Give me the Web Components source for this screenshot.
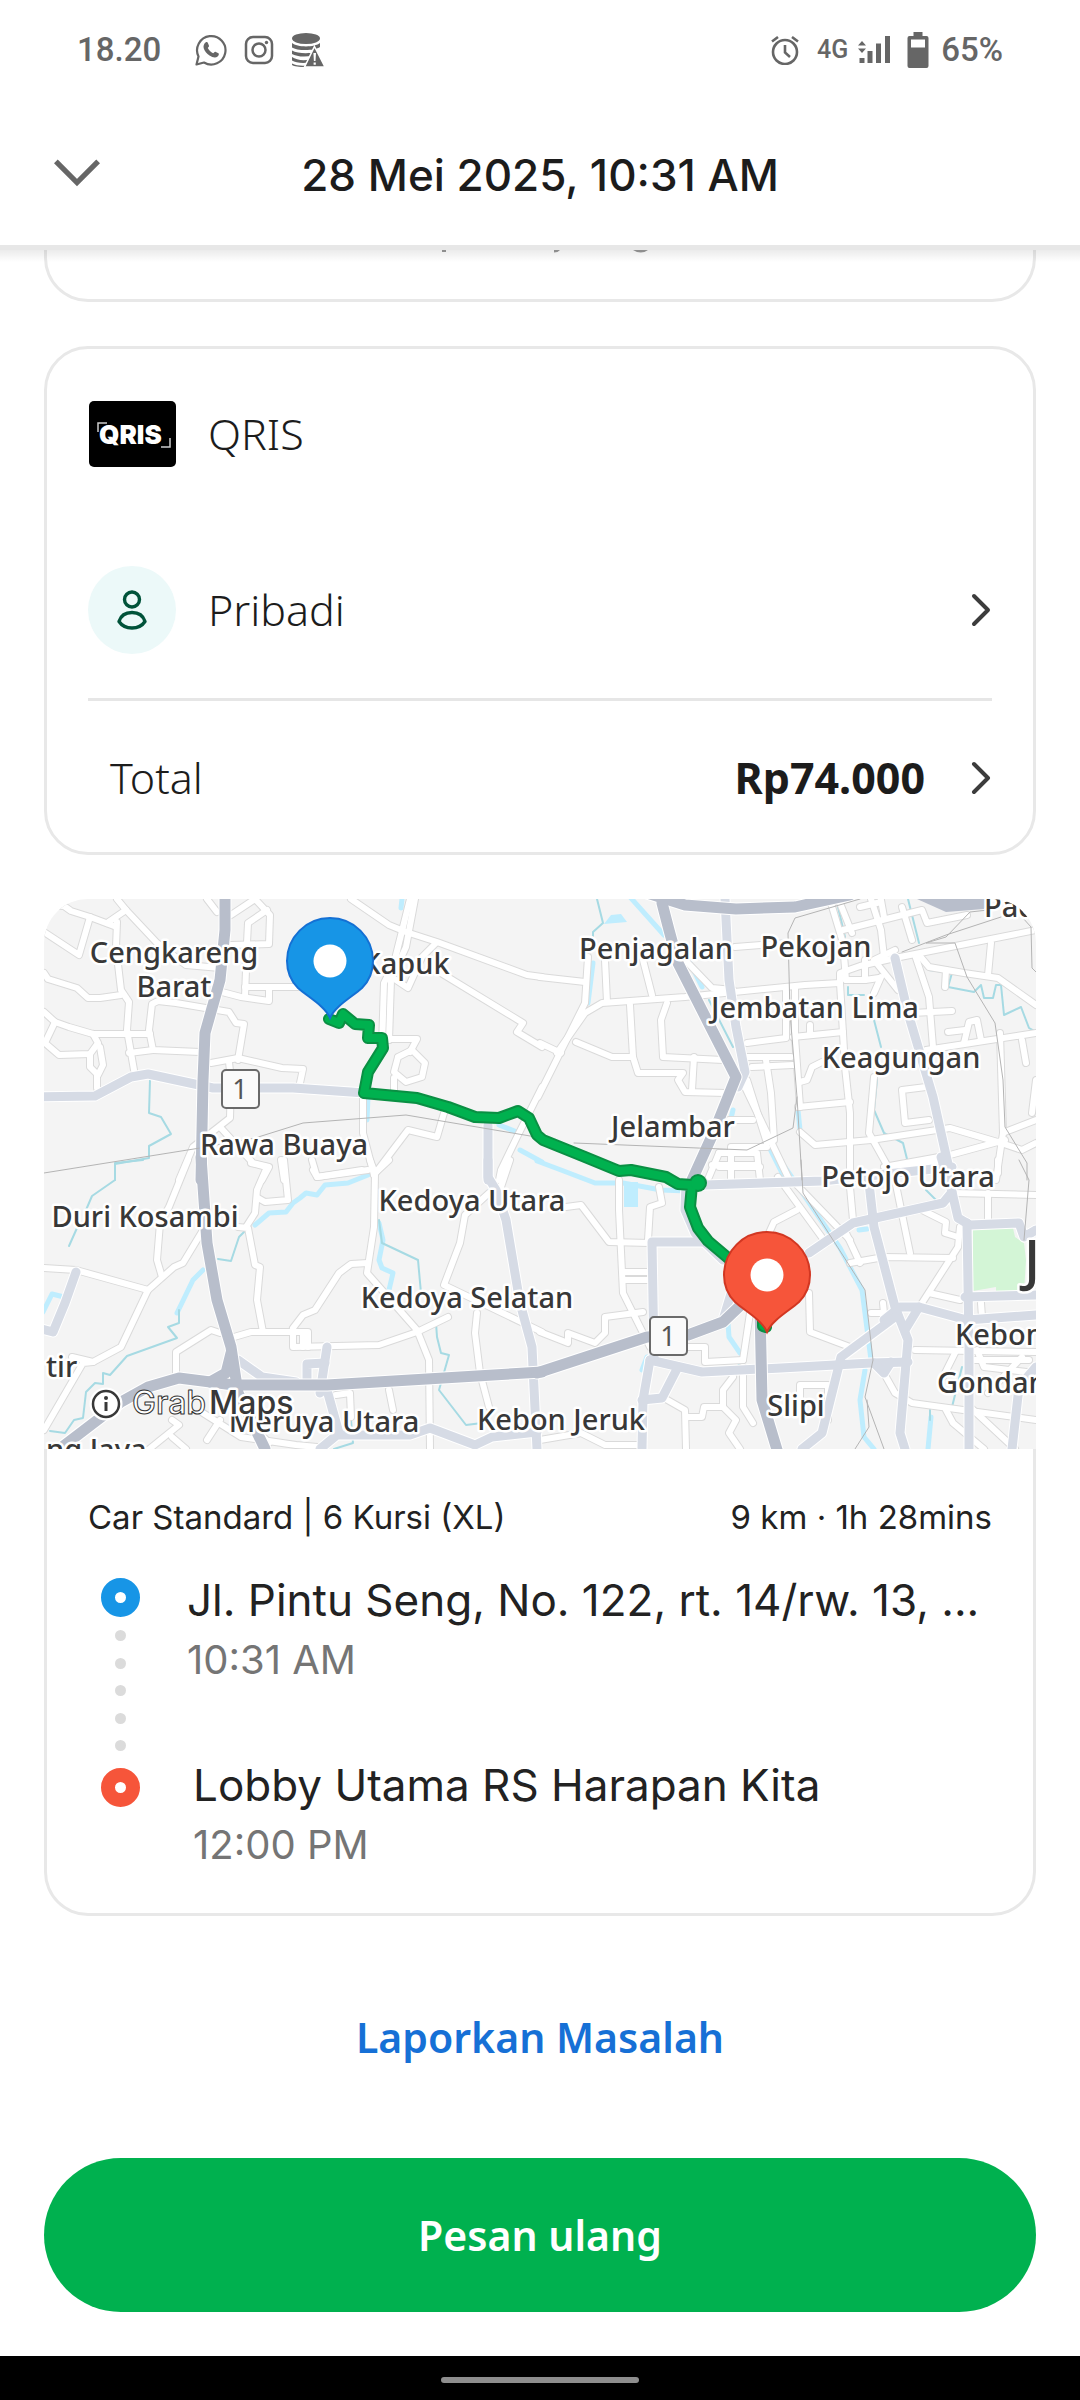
<!DOCTYPE html>
<html lang="id">
<head>
<meta charset="utf-8">
<meta name="viewport" content="width=device-width, initial-scale=1">
<title>28 Mei 2025, 10:31 AM</title>
<style>
    body {
        margin: 0;
        background: #fff;
        color: #1c1c1c;
        font-family: Inter, sans-serif;
    }
</style>
</head>
<body>
<receipt-page>
    <status-bar slot="top" time="18.20" network="4G" battery="65%"></status-bar>
    <page-header slot="top">28 Mei 2025, 10:31 AM</page-header>

    <cut-card></cut-card>

    <info-card>
        <info-row>
            <qris-logo slot="icon"></qris-logo>
            QRIS
        </info-row>
        <info-row link>
            <profile-avatar slot="icon"></profile-avatar>
            Pribadi
        </info-row>
        <total-row slot="footer" amount="Rp74.000">Total</total-row>
    </info-card>

    <trip-card service="Car Standard | 6 Kursi (XL)" summary="9 km · 1h 28mins">
        <route-map slot="map"></route-map>
        <trip-stop time="10:31 AM">Jl. Pintu Seng, No. 122, rt. 14/rw. 13, ...</trip-stop>
        <trip-stop time="12:00 PM" indent>Lobby Utama RS Harapan Kita</trip-stop>
    </trip-card>

    <report-link href="#laporkan">Laporkan Masalah</report-link>
    <primary-button>Pesan ulang</primary-button>
    <gesture-bar slot="bottom"></gesture-bar>
</receipt-page>

<script>
const BRAND_FONT = '"Noto Sans", "Open Sans", sans-serif';

const CHEVRON = `
    <svg class="chevron" width="22" height="34" viewBox="0 0 22 34" fill="none" stroke="#3c3c3c" stroke-width="4" stroke-linecap="round" stroke-linejoin="round" aria-hidden="true">
        <path d="M4 3 L18 17 L4 31"/>
    </svg>`;

class ReceiptPage extends HTMLElement {
    constructor() {
        super();
        this.attachShadow({ mode: 'open' });
        this.shadowRoot.innerHTML = `
            <style>
                :host {
                    display: flex;
                    flex-direction: column;
                    min-height: 100vh;
                }
                main {
                    flex: 1;
                    display: flex;
                    flex-direction: column;
                    padding: 0 44px 44px;
                }
            </style>
            <slot name="top"></slot>
            <main><slot></slot></main>
            <slot name="bottom"></slot>
        `;
    }
}

class StatusBar extends HTMLElement {
    constructor() {
        super();
        this.attachShadow({ mode: 'open' });
    }

    connectedCallback() {
        this.shadowRoot.innerHTML = `
            <style>
                :host {
                    display: flex;
                    justify-content: space-between;
                    align-items: center;
                    height: 100px;
                    padding: 0 77px;
                    font: 500 33px/40px Roboto, sans-serif;
                    color: #666;
                }
                div {
                    display: flex;
                    align-items: center;
                }
                .apps { gap: 17px; }
                .apps span { margin-right: 17px; }
                .network { font-size: 25px; margin: 0 10px 0 17px; }
                .battery { margin: 0 12px 0 17px; }
                svg { display: block; }
            </style>
            <div class="apps">
                <span>${this.getAttribute('time')}</span>
                <svg width="32" height="32" viewBox="0 0 32 32" aria-hidden="true">
                    <path d="M1.5 30.5 L3.5 22.5 A14.2 14.2 0 1 1 9 28.5 Z" fill="none" stroke="#666" stroke-width="2.2" stroke-linejoin="round"/>
                    <path d="M10.5 8.5 c1-.8 2-.5 2.300 .3 l1.2 3 c.3 .8-1 1.8-1.2 2.3 c1 2.2 3 4.2 5.3 5.1 c.7-.2 1.5-1.9 2.3-1.5 l3 1.5 c1 .5 .3 2.5-.8 3.4 c-2 1.6-5 1-8.1-1 c-2.8-1.9-5-4.6-5.8-7.4 c-.6-2.2 .3-4.5 1.8-5.7 Z" fill="#666"/>
                </svg>
                <svg width="30" height="30" viewBox="0 0 30 30" fill="none" stroke="#666" stroke-width="2.5" aria-hidden="true">
                    <rect x="2" y="2" width="26" height="26" rx="7"/>
                    <circle cx="15" cy="15" r="6.5"/>
                    <circle cx="22.5" cy="7.5" r="1.7" fill="#666" stroke="none"/>
                </svg>
                <svg width="34" height="34" viewBox="0 0 34 34" aria-hidden="true">
                    <ellipse cx="15" cy="5.5" rx="14" ry="5.5" fill="#666"/>
                    <path d="M1 10 C6 14.5 24 14.5 29 10 V14 C24 18 6 18 1 14.5 Z M1 17.5 C6 20.5 18 21 24 19 L22 22.500 C14 24.5 5 23.5 1 21 Z M1 24 C5 27 12 28 19 26.500 L17.500 29.5 C11 30.5 4 29.5 1 27.500 Z M1 30.500 C5 32.500 10 33 15.500 32.500 L14.5 34 C8 34 3 33.500 1 32 Z" fill="#666"/>
                    <path d="M23.5 13.5 L34 34 H13.5 Z" fill="#666" stroke="#fff" stroke-width="1.5"/>
                    <path d="M22.4 20 h2.6 l-.5 8 h-1.6 Z M22.6 29.5 h2.2 v2.2 h-2.2 Z" fill="#fff"/>
                </svg>
            </div>
            <div>
                <svg width="30" height="30" viewBox="0 0 30 30" fill="none" stroke="#666" stroke-width="2.6" aria-hidden="true">
                    <circle cx="15" cy="17" r="12"/>
                    <path d="M15 10 V17.5 L20 22 M2 6.5 L8 2 M28 6.5 L22 2"/>
                </svg>
                <span class="network">${this.getAttribute('network')}</span>
                <svg width="32" height="28" viewBox="0 0 32 28" fill="#666" aria-hidden="true">
                    <path d="M0 9.5 L4 5 L8 9.5 Z M0 12.5 H8 L4 17 Z"/>
                    <path d="M1.5 22 h5 v5 h-5 Z M9.5 15 h5 v12 h-5 Z M18 7.5 h5 v19.5 h-5 Z M27 0 h5 v27 h-5 Z"/>
                </svg>
                <svg class="battery" width="22" height="37" viewBox="0 0 22 37" aria-hidden="true">
                    <path fill="#666" fill-rule="evenodd" d="M6.5 0 h9 v4 h4 a2 2 0 0 1 2 2 v28 a2 2 0 0 1-2 2 h-17 a2 2 0 0 1-2-2 v-28 a2 2 0 0 1 2-2 h4 Z M4 7.5 v8 h14 v-8 Z"/>
                </svg>
                <span>${this.getAttribute('battery')}</span>
            </div>
        `;
    }
}

class PageHeader extends HTMLElement {
    constructor() {
        super();
        this.attachShadow({ mode: 'open' });
        this.shadowRoot.innerHTML = `
            <style>
                :host {
                    display: grid;
                    grid-template-columns: 96px 1fr 96px;
                    align-items: center;
                    height: 145px;
                    padding: 0 29px;
                    position: relative;
                    background: #fff;
                    border-bottom: 5px solid #e7e7e7;
                }
                /* shadow that falls over the scrolled content */
                :host::after {
                    content: "";
                    position: absolute;
                    left: 0;
                    right: 0;
                    top: 150px;
                    height: 12px;
                    background: linear-gradient(rgba(0, 0, 0, .08), rgba(0, 0, 0, 0));
                }
                button {
                    display: flex;
                    align-items: center;
                    height: 96px;
                    padding: 0 24px;
                    border: 0;
                    background: none;
                }
                h1 {
                    margin: 0;
                    padding-top: 4px;
                    text-align: center;
                    white-space: nowrap;
                    font-size: 44px;
                    line-height: 56px;
                    font-weight: 500;
                }
            </style>
            <button type="button" aria-label="Tutup">
                <svg width="50" height="30" viewBox="0 0 50 30" fill="none" stroke="#666" stroke-width="5.5" aria-hidden="true">
                    <path d="M3 3 L25 25 L47 3"/>
                </svg>
            </button>
            <h1><slot></slot></h1>
        `;
    }
}

// Bottom edge of the card that is scrolled under the header
class CutCard extends HTMLElement {
    constructor() {
        super();
        this.attachShadow({ mode: 'open' });
        this.shadowRoot.innerHTML = `
            <style>
                :host {
                    display: flex;
                    justify-content: center;
                    align-items: flex-start;
                    box-sizing: border-box;
                    height: 52px;
                    border: 3px solid #e8e8e8;
                    border-top: 0;
                    border-radius: 0 0 44px 44px;
                }
            </style>
            <svg width="216" height="3" viewBox="0 0 216 3" fill="#999" aria-hidden="true">
                <path d="M10 0 h4 v2 h-4 Z M122 0 h6 q-2 2.5 -6 2.5 Z M201 0 h15 q-7 5 -15 0 Z"/>
            </svg>
        `;
    }
}

class InfoCard extends HTMLElement {
    constructor() {
        super();
        this.attachShadow({ mode: 'open' });
        this.shadowRoot.innerHTML = `
            <style>
                :host {
                    display: block;
                    margin-top: 44px;
                    padding: 41px 41px 0;
                    border: 3px solid #e8e8e8;
                    border-radius: 44px;
                }
                .rows {
                    display: flex;
                    flex-direction: column;
                    gap: 88px;
                    padding-bottom: 44px;
                    border-bottom: 3px solid #e6e6e6;
                }
            </style>
            <div class="rows"><slot></slot></div>
            <slot name="footer"></slot>
        `;
    }
}

class InfoRow extends HTMLElement {
    constructor() {
        super();
        this.attachShadow({ mode: 'open' });
    }

    connectedCallback() {
        const isLink = this.hasAttribute('link');
        const tag = isLink ? 'button' : 'div';
        this.shadowRoot.innerHTML = `
            <style>
                :host { display: block; }
                .row {
                    display: flex;
                    align-items: center;
                    gap: 32px;
                    width: 100%;
                    min-height: 88px;
                    padding: 0;
                    border: 0;
                    background: none;
                    color: inherit;
                    font: 300 43px/56px ${BRAND_FONT};
                    text-align: left;
                }
                .label { flex: 1; }
            </style>
            <${tag} class="row" ${isLink ? 'type="button"' : ''}>
                <slot name="icon"></slot>
                <span class="label"><slot></slot></span>
                ${isLink ? CHEVRON : ''}
            </${tag}>
        `;
    }
}

class TotalRow extends HTMLElement {
    constructor() {
        super();
        this.attachShadow({ mode: 'open' });
    }

    connectedCallback() {
        this.shadowRoot.innerHTML = `
            <style>
                :host { display: block; }
                button {
                    display: flex;
                    align-items: center;
                    width: 100%;
                    height: 151px;
                    padding: 2px 0 0 22px;
                    border: 0;
                    background: none;
                    color: inherit;
                    font: 300 43px/56px ${BRAND_FONT};
                    text-align: left;
                }
                span { flex: 1; }
                strong { font-weight: 700; }
                .chevron { margin-left: 45px; }
            </style>
            <button type="button">
                <span><slot></slot></span>
                <strong>${this.getAttribute('amount')}</strong>
                ${CHEVRON}
            </button>
        `;
    }
}

class QrisLogo extends HTMLElement {
    constructor() {
        super();
        this.attachShadow({ mode: 'open' });
        this.shadowRoot.innerHTML = `
            <style>
                :host { display: block; width: 88px; }
                svg { display: block; }
                text { font: 900 26px Inter, sans-serif; fill: #fff; }
            </style>
            <svg width="88" height="66" viewBox="0 0 88 66">
                <rect x="1" width="87" height="66" rx="5" fill="#000"/>
                <text x="11" y="43">QRIS</text>
                <path d="M10 31 V22 H19 M82 37 V46 H73" fill="none" stroke="#ccc" stroke-width="1.5"/>
            </svg>
        `;
    }
}

class ProfileAvatar extends HTMLElement {
    constructor() {
        super();
        this.attachShadow({ mode: 'open' });
        this.shadowRoot.innerHTML = `
            <style>
                :host {
                    display: flex;
                    align-items: center;
                    justify-content: center;
                    width: 88px;
                    height: 88px;
                    border-radius: 50%;
                    background: #ecf9f9;
                }
            </style>
            <svg width="30" height="40" viewBox="0 0 30 40" fill="none" stroke="#00533a" stroke-width="3.4" stroke-linejoin="round" aria-hidden="true">
                <circle cx="15" cy="9.5" r="7.5"/>
                <path d="M2 31.5 C4 25 9 22.5 15 22.5 C21 22.5 26 25 28 31.5 C25 36 20 38 15 38 C10 38 5 36 2 31.5 Z"/>
            </svg>
        `;
    }
}

class TripCard extends HTMLElement {
    constructor() {
        super();
        this.attachShadow({ mode: 'open' });
    }

    connectedCallback() {
        this.shadowRoot.innerHTML = `
            <style>
                :host { display: block; margin-top: 44px; }
                .details {
                    padding: 46px 41px 44px;
                    border: 3px solid #e8e8e8;
                    border-top: 0;
                    border-radius: 0 0 44px 44px;
                    color: #222;
                }
                .meta {
                    display: flex;
                    justify-content: space-between;
                    font-size: 33px;
                    line-height: 44px;
                }
                .route {
                    display: flex;
                    gap: 47px;
                    margin-top: 33px;
                }
                .line {
                    display: flex;
                    flex-direction: column;
                    align-items: center;
                    padding: 6px 0 0 13px;
                }
                .marker {
                    box-sizing: border-box;
                    width: 39px;
                    height: 39px;
                    border: 14px solid #1795e6;
                    border-radius: 50%;
                }
                .marker.end { border-color: #f6553a; }
                .dots {
                    display: flex;
                    flex-direction: column;
                    justify-content: space-between;
                    height: 121px;
                    margin: 13px 0 17px;
                }
                .dots i {
                    width: 11px;
                    height: 11px;
                    border-radius: 50%;
                    background: #dbdbdb;
                }
                .stops {
                    display: flex;
                    flex-direction: column;
                    gap: 73px;
                    min-width: 0;
                }
            </style>
            <slot name="map"></slot>
            <div class="details">
                <div class="meta">
                    <span>${this.getAttribute('service')}</span>
                    <span>${this.getAttribute('summary')}</span>
                </div>
                <div class="route">
                    <div class="line">
                        <div class="marker"></div>
                        <div class="dots"><i></i><i></i><i></i><i></i><i></i></div>
                        <div class="marker end"></div>
                    </div>
                    <div class="stops"><slot></slot></div>
                </div>
            </div>
        `;
    }
}

class TripStop extends HTMLElement {
    constructor() {
        super();
        this.attachShadow({ mode: 'open' });
    }

    connectedCallback() {
        this.shadowRoot.innerHTML = `
            <style>
                :host { display: block; }
                :host([indent]) { padding-left: 6px; }
                .place {
                    font-size: 44px;
                    line-height: 56px;
                    white-space: nowrap;
                }
                .time {
                    display: block;
                    margin-top: 8px;
                    font-size: 40px;
                    line-height: 48px;
                    color: #757575;
                }
            </style>
            <div class="place"><slot></slot></div>
            <time class="time">${this.getAttribute('time')}</time>
        `;
    }
}

const SHEETS = {
    nw: [-44, -19],
    ne: [496, -19],
    sw: [-44, 261],
    se: [496, 261]
};

const MINOR = {
    nw: [
        '128,75 185,78 205,92 260,110 330,138', '128,155 230,225 262,112', '312,130 365,90 340,57',
        '365,90 455,190 540,255 640,265', '340,125 338,200 352,330 375,365 370,450 388,570',
        '128,280 140,298 225,325 255,355 290,355 352,345', '580,515 445,510 432,450 440,372 460,362 510,370 665,395 685,430 710,432 690,540',
        '445,510 375,520', '128,395 160,425 200,440 270,462 435,462', '160,425 130,490 170,525 262,522 285,490 270,462',
        '262,522 262,560 285,585 300,555 290,500', '282,585 282,625', '600,57 630,95', '670,105 740,57',
        '740,57 785,105 780,192 670,195', '775,90 720,130 718,190 712,350', '645,335 700,350 780,362 780,325', '712,322 880,322',
        '612,550 690,535 820,565 880,568 872,610', '665,545 672,600 668,715 560,800 520,900', '640,740 735,850 780,860 760,900',
        '1020,57 1130,135 1180,155 1270,185 1530,285 1575,290', '1190,57 1145,250 1115,310 1110,500 1060,600', '1205,57 1180,200 1135,300 1130,480',
        '1150,300 1185,325 1225,230 1265,190', '1265,270 1520,430 1500,455 1575,500', '1130,478 1210,478 1190,515',
        '1155,530 1195,510 1235,550 1225,590 1180,605 1145,575 1155,530', '1145,595 1145,640', '1055,650 1055,760 1085,885',
        '1290,700 1270,770 1185,750 1085,885', '1575,620 1500,770 1455,870 1450,900', '815,840 825,900', '905,840 920,890 1050,870'
    ],
    ne: [
        '0,292 130,305', '140,230 130,370 -5,650', '190,240 195,365', '300,240 325,345', '0,490 60,520',
        '50,520 130,400 180,370 420,350 770,315 870,310', '870,300 870,280 930,258 1030,235 1440,150',
        '105,485 210,530 270,530 285,580 415,580 400,600 420,635 540,640', '262,375 270,530', '370,370 350,420 358,530 530,540',
        '448,530 440,630', '420,240 500,325 560,330', '565,200 720,190', '600,490 715,475 715,320', '735,470 880,455', '785,435 785,465',
        '600,530 730,530', '615,560 735,555', '655,540 670,640 680,780', '590,610 720,890', '600,600 660,790', '740,320 740,470 755,680',
        '870,310 885,560 900,700 900,900', '750,680 900,665', '755,605 775,600 790,560 820,545', '845,70 880,190 890,300',
        '870,70 905,160', '960,57 990,150 1000,230', '880,150 1110,90 1125,130 1240,105', '1050,80 1080,180', '990,60 1000,110', '930,80 990,65',
        '1030,210 970,240 1040,330', '945,240 945,300', '970,340 990,290', '890,300 945,300 985,295',
        '1100,225 1130,260 1230,280 1330,295 1440,375', '1310,190 1300,285', '1180,270 1175,320', '1090,225 1130,350 1140,500',
        '1080,400 1195,393', '1120,510 1440,460', '1185,455 1235,450', '1230,490 1245,425 1270,420 1280,480', '1400,480 1412,550',
        '1120,620 1050,630 1060,730 1130,720', '970,590 955,760 1010,860', '755,755 800,795 960,780 1190,745 1340,790 1400,810 1440,790',
        '1000,860 1190,825 1350,780', '1335,460 1345,760 1325,900', '1440,720 1350,755', '1440,600 1430,700', '550,720 620,720',
        '560,800 660,800', '520,820 630,820 640,900', '500,855 630,855', '555,800 555,900', '490,890 520,820'
    ],
    sw: [
        '545,0 490,140 465,190 455,300 470,350', '128,325 220,330 430,390', '590,210 530,310 505,320 430,390 350,560 270,605 210,590',
        '270,605 240,610 128,810', '730,10 775,20 745,90 740,160 715,200', '690,200 720,205 740,315 755,320 745,420 765,515',
        '825,0 835,120 770,125 750,115', '910,30 920,50 1070,30', '1075,0 1090,40 1085,200 1065,340 1210,510 1245,600 1250,867', '1090,40 1130,0',
        '510,640 512,575 612,510 640,520', '680,530 730,515 895,515 895,560', '850,515 850,560 1100,555 1210,515 1300,470',
        '850,505 880,465 915,450 985,340 1020,312 1070,310', '1480,0 1455,80 1420,100 1350,165 1335,250 1290,375 1575,515',
        '1385,460 1380,520 1395,640 1420,740', '975,705 1015,700 1020,770', '1130,690 1140,750', '430,870 520,795 500,780',
        '500,830 540,867', '640,780 600,840', '590,760 700,830 860,855 920,860', '720,780 780,850', '880,520 880,560'
    ],
    se: [
        '230,60 230,150 240,400 320,560', '345,80 355,130 320,140 315,240', '75,140 120,135 200,245 320,250', '245,335 330,335',
        '245,360 325,360', '0,515 80,550 80,520 160,550 190,520 190,470 300,455', '665,220 680,185 745,150', '690,50 830,250',
        '900,80 910,180', '780,400 785,515 830,535 900,560', '900,310 1000,290 1200,295', '1220,200 1215,260 1110,430', '1030,60 1075,280',
        '890,220 930,310', '1130,400 1220,420', '430,560 480,560 480,605 590,600', '610,460 590,600', '1090,570 1440,575',
        '560,650 530,690 530,740 570,780 550,820 580,867', '590,620 590,740 620,790', '360,715 420,750 425,867', '430,770 470,770 475,740 530,740',
        '0,840 120,820 190,855 300,855', '755,720 755,675 835,675 835,780', '1005,650 1030,700 1080,730 1440,780', '1180,750 1200,790 1290,867',
        '1250,740 1380,867', '1260,600 1420,600', '1300,700 1400,590', '1205,580 1170,650', '1300,100 1300,180', '1200,100 1440,105',
        '1280,430 1285,470', '1110,150 1180,185 1175,220 1215,230', '740,70 900,240', '960,460 1000,460 995,430', '1270,570 1290,620 1440,640',
        '1330,0 1330,40', '1040,30 1170,0', '520,20 640,20'
    ]
};

const MAJOR = {
    nw: ['100,652 275,648 380,592 430,583 620,625 850,625 1060,640', '1418,735 1418,900'],
    ne: ['538,57 550,300 570,440 595,575 575,620', '1030,235 1070,400 1140,650 1190,880'],
    sw: [
        '690,600 760,650 860,665', '950,560 930,700', '892,665 892,612 945,610', '950,690 985,820', '930,867 980,825 1190,825 1250,805 1380,855 1430,830 1560,815',
        '220,335 190,430 155,515 100,500', '1418,0 1418,50 1440,90 1470,180 1510,430 1545,560 1560,867'
    ],
    se: [
        '480,75 820,62 1195,20', '425,70 420,150 450,220 530,300', '330,590 325,245 470,245', '560,380 530,480',
        '780,280 910,190 1170,130 1195,95 1215,175 1250,195 1390,190 1405,230 1440,210', '955,70 970,200 1030,440 1070,540 1045,820 1060,867',
        '1240,190 1245,560 1245,867', '1235,412 1440,405', '1000,480 1045,440 1100,440 1240,480 1440,465', '1100,440 1060,510',
        '760,867 820,820 875,590 1030,470', '320,600 470,635 700,625 960,610 1070,605', '970,610 1000,640 1020,605', '320,600 300,720 295,867',
        '400,620 355,715 295,720', '1440,620 1390,680 1370,867', '1165,-10 1195,95'
    ]
};

const HIGHWAY = {
    nw: ['652,57 652,150 640,300 595,460 590,600 585,900'],
    ne: ['310,40 420,75 570,88 740,80 900,45', '355,70 375,150 400,250 500,450 570,590 510,740 440,900'],
    sw: ['585,-10 600,250 630,420 670,560 690,700 770,867', '180,860 350,725 430,680 520,655 680,675 950,675 1575,635', '670,580 655,640 610,665'],
    se: ['-10,638 310,530 430,525 530,485 590,430', '640,440 645,720 690,880']
};

const CANAL = {
    nw: ['437,600 434,700 467,710 497,762 434,797 434,835 335,852 335,900'],
    ne: [
        '165,57 183,130 155,155 155,180', '1068,57 1100,190', '970,420 990,500', '980,600 970,690 1000,760 1055,790 1068,850',
        '895,320 895,345 940,345', '985,310 960,340', '1130,270 1195,280 1185,320 1260,335 1280,315 1290,355 1315,355 1325,315 1340,315 1348,405 1398,380 1420,445 1440,455',
        '865,80 885,170', '490,360 560,500', '720,475 735,475', '375,90 380,130'
    ],
    sw: [
        '415,0 335,10 335,60 268,107 250,150', '225,205 200,258', '710,215 693,230 670,303 632,297',
        '520,450 520,490 487,500 515,535 370,587 320,645 298,640 298,672 275,670 250,695 240,775 215,780 190,820 145,812',
        '1100,180 1110,250 1213,300 1222,400', '1290,475 1265,490 1268,530 1280,580 1305,585 1275,690 1353,795 1400,790', '1020,780 1025,850 970,867'
    ],
    se: ['1120,90 1155,125', '1225,620 1195,740', '1132,750 1132,780', '550,655 580,610']
};

const WATER = {
    nw: ['1168,57 1165,85', '1068,650 1065,720', '1450,735 1500,755', '1510,810 1575,845'],
    ne: ['260,50 360,165', '155,250 140,370', '435,250 470,320', '665,800 710,890', '750,690 755,750', '560,690 550,740'],
    sw: [
        '590,330 560,360 515,460', '740,195 780,160 830,155 850,130 870,115 890,100 920,105 945,75 1010,70 1070,45',
        '1100,190 1112,240 1100,300 1110,325 1140,340 1130,390', '125,455 150,403 185,412'
    ],
    se: [
        '-10,3 60,30 160,68 240,70 350,90 430,92', '690,-10 870,265 935,390 960,600', '945,630 930,720 940,830 970,867',
        '545,490 550,530 580,580', '925,210 950,207', '1135,770 1128,867', '295,630 310,590'
    ]
};

const RAIL = {
    nw: ['128,880 580,803 740,775 880,730 1180,705 1575,775'],
    ne: [
        '930,57 740,115 720,160 725,400 745,650 760,900', '100,790 600,810 735,745 745,650', '1440,275 1430,265 1425,140 1400,110',
        '1340,110 1180,165 1050,215', '1300,90 1250,95 1180,170 1120,190 1205,190 1240,290 1320,430 1345,600 1350,740 1415,850 1415,900'
    ],
    sw: [],
    se: ['758,0 765,100 850,240 945,390 968,600 945,710 1000,867', '950,720 955,800 915,867', '1390,0 1420,60 1405,240']
};

const AREAS = [
    ['#bfedfe', 'ne', '185,133 205,105 235,103 252,125'],
    ['#bfedfe', 'se', '245,65 285,65 285,142 245,142'],
    ['#b8becb', 'ne', '1095,57 1180,97 1290,88 1310,57'],
    ['#d3f5d6', 'se', '1258,207 1375,205 1380,230 1405,250 1412,300 1405,395 1325,393 1325,382 1258,392']
];

const ROUTE = '285,120 295,124 299,115 311,125 325,126 324,139 338,139 339,149 324,173 320,194 373,199 404,208 431,218 455,219 474,212 485,219 493,236 499,241 541,258 575,272 587,271 622,278 634,285 648,286 646,308 654,329 664,342 690,364';

const LABELS = [
    [130, 64, 'Cengkareng'], [130, 98, 'Barat'], [362, 75, 'Kapuk'], [240, 256, 'Rawa Buaya'],
    [612, 60, 'Penjagalan'], [772, 58, 'Pekojan'], [771, 119, 'Jembatan Lima'], [857, 169, 'Keagungan'],
    [629, 238, 'Jelambar'], [864, 288, 'Petojo Utara'], [101, 328, 'Duri Kosambi'], [428, 312, 'Kedoya Utara'],
    [423, 409, 'Kedoya Selatan'], [280, 533, 'Meruya Utara'], [517, 531, 'Kebon Jeruk'], [752, 517, 'Slipi']
];

// Labels that run off the edge of the map
const EDGE_LABELS = [
    [940, 18, 'Pad'], [2, 478, 'tir'], [2, 561, 'ng Jaya'], [911, 446, 'Kebon'], [893, 494, 'Gondan']
];

class RouteMap extends HTMLElement {
    constructor() {
        super();
        this.attachShadow({ mode: 'open' });
    }

    connectedCallback() {
        this.shadowRoot.innerHTML = `
            <style>
                :host { display: block; }
                svg {
                    display: block;
                    width: 100%;
                    border-radius: 44px 44px 0 0;
                    background: #f4f4f4;
                }
                polyline {
                    fill: none;
                    stroke-linejoin: round;
                    stroke-linecap: round;
                }
                text {
                    font: 500 29px "Noto Sans", sans-serif;
                    fill: #383838;
                    stroke: #fff;
                    stroke-width: 5px;
                    stroke-linejoin: round;
                    paint-order: stroke;
                }
                .mid { text-anchor: middle; }
                .city { font-size: 56px; }
                .shield { font-size: 27px; font-weight: 400; fill: #555; stroke: none; }
                .brand { font: 500 32px Inter, sans-serif; }
                .outline { fill: #fff; stroke: #333; stroke-width: 1px; paint-order: normal; }
            </style>
            <svg viewBox="0 0 992 550" role="img" aria-label="Peta perjalanan">
                ${this.areas()}
                ${this.lines(WATER, '#bfedfe', 5)}
                ${this.lines(CANAL, '#a6dae3', 2)}
                ${this.lines(MINOR, '#dadada', 8)}
                ${this.lines(MINOR, '#fff', 6)}
                ${this.lines(MAJOR, '#fff', 11)}
                ${this.lines(MAJOR, '#d6dbe5', 9)}
                ${this.lines(HIGHWAY, '#fff', 13)}
                ${this.lines(HIGHWAY, '#b8becb', 11)}
                ${this.lines(RAIL, '#b4b4b4', 1)}
                ${this.shield(178, 171)}
                ${this.shield(606, 418)}
                ${LABELS.map(([x, y, name]) => `<text class="mid" x="${x}" y="${y}">${name}</text>`).join('')}
                ${EDGE_LABELS.map(([x, y, name]) => `<text x="${x}" y="${y}">${name}</text>`).join('')}
                <text class="city" x="980" y="381">J</text>
                ${this.route('#0a8f43', 12, 9)}
                ${this.route('#00b14f', 8, 7)}
                ${this.pin(286, 62, '#1795e6', '#1470d4')}
                ${this.pin(723, 376, '#f6553a', '#d23722')}
                <circle cx="62" cy="505" r="14" fill="#fff" stroke="#fff" stroke-width="5"/>
                <circle cx="62" cy="505" r="13" fill="#fff" stroke="#383838" stroke-width="2.5"/>
                <path d="M62 503 V512" stroke="#383838" stroke-width="3"/>
                <circle cx="62" cy="499" r="2" fill="#383838"/>
                <text class="brand outline" x="88" y="515">Grab</text>
                <text class="brand" x="165" y="515">Maps</text>
            </svg>
        `;
    }

    project(sheet, points) {
        const [left, top] = SHEETS[sheet];
        return points.split(' ').map(pair => {
            const [x, y] = pair.split(',').map(Number);
            return `${Math.round(left + x / 2.904)},${Math.round(top + y / 3)}`;
        }).join(' ');
    }

    lines(layer, color, width) {
        let out = '';
        for (const sheet in layer) {
            for (const points of layer[sheet]) {
                out += `<polyline points="${this.project(sheet, points)}" stroke="${color}" stroke-width="${width}"/>`;
            }
        }
        return out;
    }

    areas() {
        return AREAS.map(([fill, sheet, points]) => `<polygon points="${this.project(sheet, points)}" fill="${fill}"/>`).join('');
    }

    shield(x, y) {
        return `
            <rect x="${x}" y="${y}" width="37" height="38" rx="4" fill="#fafafa" stroke="#6a6a6a" stroke-width="2"/>
            <text class="mid shield" x="${x + 18}" y="${y + 29}">1</text>`;
    }

    route(color, width, radius) {
        return `
            <polyline points="${ROUTE}" stroke="${color}" stroke-width="${width}"/>
            <polyline points="719,415 719,427 722,428" stroke="${color}" stroke-width="${width}"/>
            <circle cx="654" cy="284" r="${radius}" fill="${color}"/>`;
    }

    pin(x, y, fill, stroke) {
        return `
            <g transform="translate(${x} ${y})">
                <path d="M0 57 C-5 45 -22 36 -32 27 C-40 19 -43 9 -43 0 A43 43 0 0 1 43 0 C43 9 40 19 32 27 C22 36 5 45 0 57 Z" fill="${fill}" stroke="${stroke}" stroke-width="2"/>
                <circle r="16.5" fill="#fff"/>
            </g>`;
    }
}

class ReportLink extends HTMLElement {
    constructor() {
        super();
        this.attachShadow({ mode: 'open' });
    }

    connectedCallback() {
        this.shadowRoot.innerHTML = `
            <style>
                :host {
                    flex: 1;
                    display: flex;
                    align-items: center;
                    justify-content: center;
                    min-height: 160px;
                }
                a {
                    color: #1670d6;
                    font: 600 41px/56px ${BRAND_FONT};
                    text-decoration: none;
                }
            </style>
            <a href="${this.getAttribute('href')}"><slot></slot></a>
        `;
    }
}

class PrimaryButton extends HTMLElement {
    constructor() {
        super();
        this.attachShadow({ mode: 'open' });
        this.shadowRoot.innerHTML = `
            <style>
                :host { display: block; }
                button {
                    display: block;
                    width: 100%;
                    height: 154px;
                    border: 0;
                    border-radius: 77px;
                    background: #00b14f;
                    color: #fff;
                    font: 600 41px/56px ${BRAND_FONT};
                }
            </style>
            <button type="button"><slot></slot></button>
        `;
    }
}

class GestureBar extends HTMLElement {
    constructor() {
        super();
        this.attachShadow({ mode: 'open' });
        this.shadowRoot.innerHTML = `
            <style>
                :host {
                    display: flex;
                    align-items: center;
                    justify-content: center;
                    height: 44px;
                    padding-top: 4px;
                    box-sizing: border-box;
                    background: #000;
                }
                div {
                    width: 198px;
                    height: 6px;
                    border-radius: 3px;
                    background: #8e8e8e;
                }
            </style>
            <div></div>
        `;
    }
}

customElements.define('receipt-page', ReceiptPage);
customElements.define('status-bar', StatusBar);
customElements.define('page-header', PageHeader);
customElements.define('cut-card', CutCard);
customElements.define('info-card', InfoCard);
customElements.define('info-row', InfoRow);
customElements.define('total-row', TotalRow);
customElements.define('qris-logo', QrisLogo);
customElements.define('profile-avatar', ProfileAvatar);
customElements.define('trip-card', TripCard);
customElements.define('trip-stop', TripStop);
customElements.define('route-map', RouteMap);
customElements.define('report-link', ReportLink);
customElements.define('primary-button', PrimaryButton);
customElements.define('gesture-bar', GestureBar);
</script>
</body>
</html>
